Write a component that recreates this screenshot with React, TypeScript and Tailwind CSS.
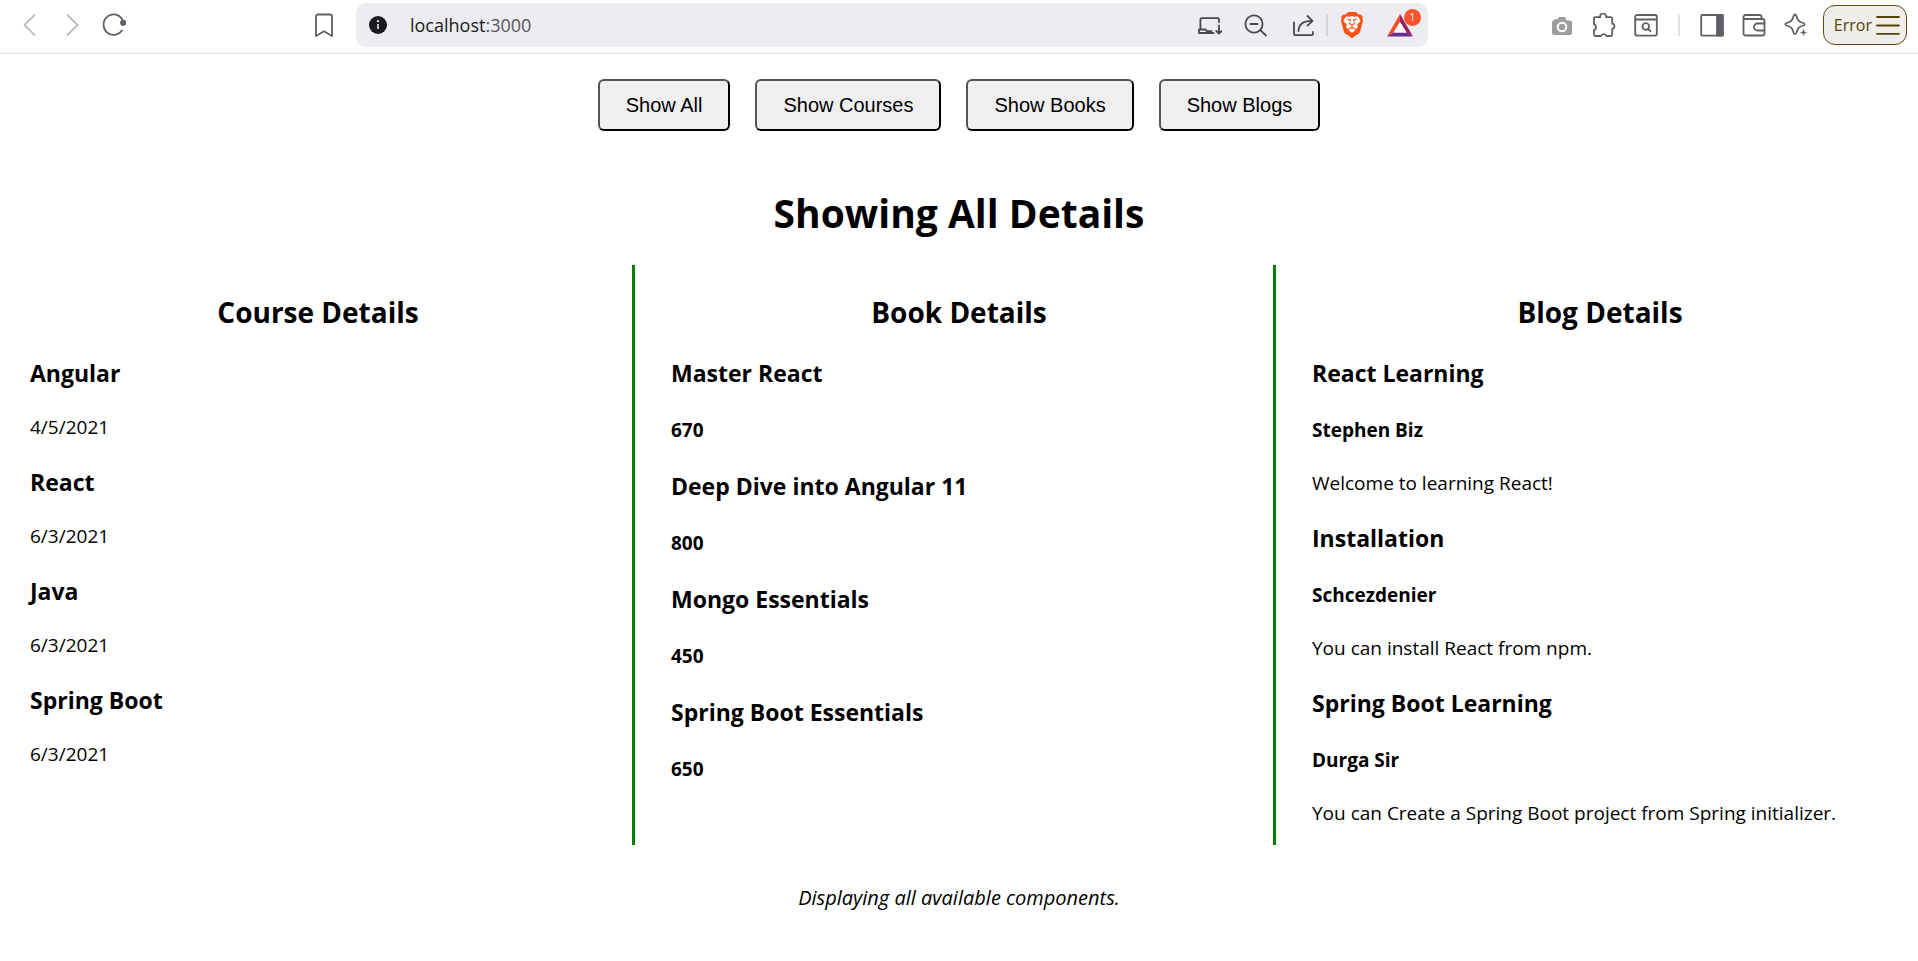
import { useState } from "react";
import type { ReactNode } from "react";
import { SiBrave } from "react-icons/si";

type View = "all" | "courses" | "books" | "blogs";

const courses = [
  { name: "Angular", date: "4/5/2021" },
  { name: "React", date: "6/3/2021" },
  { name: "Java", date: "6/3/2021" },
  { name: "Spring Boot", date: "6/3/2021" },
];

const books = [
  { name: "Master React", price: 670 },
  { name: "Deep Dive into Angular 11", price: 800 },
  { name: "Mongo Essentials", price: 450 },
  { name: "Spring Boot Essentials", price: 650 },
];

const blogs = [
  { title: "React Learning", author: "Stephen Biz", text: "Welcome to learning React!" },
  { title: "Installation", author: "Schcezdenier", text: "You can install React from npm." },
  {
    title: "Spring Boot Learning",
    author: "Durga Sir",
    text: "You can Create a Spring Boot project from Spring initializer.",
  },
];

const views: { id: View; label: string }[] = [
  { id: "all", label: "Show All" },
  { id: "courses", label: "Show Courses" },
  { id: "books", label: "Show Books" },
  { id: "blogs", label: "Show Blogs" },
];

function ToolButton({ label, children }: { label: string; children: ReactNode }) {
  return (
    <button type="button" aria-label={label} className="size-6 shrink-0">
      <svg
        viewBox="0 0 24 24"
        className="size-6"
        fill="none"
        stroke="currentColor"
        strokeWidth="1.8"
        strokeLinecap="round"
        strokeLinejoin="round"
      >
        {children}
      </svg>
    </button>
  );
}

function AddressBar() {
  return (
    <div className="ml-5 flex h-11 flex-1 items-center rounded-[10px] bg-[#edecf1] pr-[14px] pl-3 text-[#47474d]">
      <button type="button" aria-label="Site information" className="size-5 shrink-0">
        <svg viewBox="0 0 20 20" className="size-5">
          <circle cx="10" cy="10" r="9" fill="#1b1a20" />
          <circle cx="10" cy="6.2" r="1.1" fill="#edecf1" />
          <path d="M10 9v5" stroke="#edecf1" strokeWidth="1.6" />
        </svg>
      </button>
      <a href="#" className="ml-[22px] flex-1 text-[18px] leading-6 text-[#1b1a20]">
        localhost<span className="text-[#56555c]">:3000</span>
      </a>
      <ToolButton label="Install app">
        <path d="M21 9V6.600a1.400 1.400 0 0 0-1.400-1.400H3.800a1.400 1.400 0 0 0-1.400 1.400V16" />
        <path d="M1 16.500h6.200l1.600 1.600h4.700M1 16.500V20h14.500" />
        <path d="M21 12.500v8M18.300 18l2.700 2.700 2.700-2.700" />
      </ToolButton>
      <div className="ml-[22px] flex">
        <ToolButton label="Zoom out">
          <circle cx="10" cy="11" r="8.600" />
          <path d="M6.500 11h7M16.300 17.200L22 22.500" />
        </ToolButton>
      </div>
      <div className="ml-6 flex">
        <ToolButton label="Share">
          <path d="M2 9.500v11.300a1.400 1.400 0 0 0 1.400 1.400h16.200a1.400 1.400 0 0 0 1.400-1.400V19" />
          <path d="M6.500 18C6.700 11.500 10.500 7.800 20 7.800M15.500 3l5 4.800-5 4.800" />
        </ToolButton>
      </div>
      <span className="ml-[10px] h-[22px] w-[2px] bg-[#d2d2d8]" />
      <button type="button" aria-label="Brave Shields" className="ml-3 flex h-7 w-6 items-center justify-center">
        <svg viewBox="0 0 24 28" className="h-7 w-6">
          <path d="M6 6h12l2 4-2.500 10L12 25l-5.500-5L4 10z" fill="#fff" />
          <SiBrave x={-1} y={1} size={26} color="#fb5414" />
        </svg>
      </button>
      <button type="button" aria-label="Brave Rewards" className="relative ml-[22px] h-7 w-7">
        <svg viewBox="0 0 28 28" className="size-7">
          <path d="M14 3L1 25.500l6.500-4L14 11z" fill="#fa4a23" />
          <path d="M14 3l13 22.500-6.500-4L14 11z" fill="#9b1f63" />
          <path d="M1 25.500h26l-6.500-4h-13z" fill="#662d91" />
          <path d="M14 11l6.500 10.500h-13z" fill="#fff" />
        </svg>
        <span className="absolute -top-[2px] -right-[7px] size-[17px] rounded-full bg-[#fb542b] text-center text-[10px] leading-[17px] text-white">
          1
        </span>
      </button>
    </div>
  );
}

function BrowserBar() {
  return (
    <header className="flex h-[54px] items-center border-b border-[#dfdfe1] pr-[11px] pb-[3px] pl-[18px] text-[#5d6166]">
      <nav className="flex gap-[18px]">
        <span className="flex text-[#bcbdbf]">
          <ToolButton label="Back">
            <path d="M16.500 2L6.500 12l10 10" />
          </ToolButton>
        </span>
        <span className="flex text-[#bcbdbf]">
          <ToolButton label="Forward">
            <path d="M7.500 2l10 10-10 10" />
          </ToolButton>
        </span>
        <ToolButton label="Reload">
          <path d="M19.800 17.500A10 10.300 0 1 1 20.500 7" />
          <circle cx="21.200" cy="9.800" r="2.200" fill="currentColor" />
        </ToolButton>
      </nav>
      <div className="ml-[186px] flex">
        <ToolButton label="Bookmark">
          <path d="M4 3.500a2 2 0 0 1 2-2h12a2 2 0 0 1 2 2V23l-8-4.700L4 23z" />
        </ToolButton>
      </div>
      <AddressBar />
      <div className="ml-[122px] flex items-center gap-[18px]">
        <ToolButton label="Screenshot">
          <path
            d="M3.500 7.500h1V6h3v1.500L8.500 4.800A1 1 0 0 1 9.400 4h5.200a1 1 0 0 1 .9.800l1 2.700h3.700a1.800 1.800 0 0 1 1.800 1.800v10.900a1.800 1.800 0 0 1-1.800 1.800H3.800A1.800 1.800 0 0 1 2 20.200V9.300a1.800 1.800 0 0 1 1.500-1.800z"
            fill="#9d9d9d"
            stroke="none"
          />
          <circle cx="12" cy="14" r="4.300" stroke="#fff" strokeWidth="2" />
        </ToolButton>
        <ToolButton label="Extensions">
          <path d="M3 4.200h5.200a3 3 0 1 1 5.800 0h5a1.200 1.200 0 0 1 1.200 1.200v5a3 3 0 0 1 0 5.800v5.600a1.200 1.200 0 0 1-1.200 1.200h-4.500a3 3 0 0 0-5.600 0H3.200A1.200 1.200 0 0 1 2 21.800v-4.600a3.200 3.200 0 0 0 0-6V5.200a1 1 0 0 1 1-1z" />
        </ToolButton>
        <ToolButton label="Search tabs">
          <rect x="1.200" y="2" width="21.600" height="20.600" rx="1.800" />
          <path d="M1.500 6.500h21" />
          <circle cx="11.800" cy="13.500" r="3.300" />
          <path d="M14.300 16l2.200 2.200" />
        </ToolButton>
        <span className="mx-[2px] h-[22px] w-[2px] bg-[#e0e0e5]" />
        <ToolButton label="Sidebar">
          <rect x="1.200" y="2" width="21.600" height="20.600" rx="1" />
          <path d="M17 2h5.800v20.600H17z" fill="currentColor" />
        </ToolButton>
        <ToolButton label="Wallet">
          <path d="M1.500 6h19a2 2 0 0 1 2 2v12.500a2 2 0 0 1-2 2H3.500a2 2 0 0 1-2-2V4a2 2 0 0 1 2-2h14a2 2 0 0 1 2 2v2" />
          <path d="M22.500 10.500h-7a3.500 3.500 0 0 0 0 7h7" />
        </ToolButton>
        <ToolButton label="Assistant">
          <path d="M11 1.500c.8 0 1.100.4 1.300 1.200 1.300 4.600 2.300 6 7 7.300 1.800.5 1.800 2 0 2.500-4.700 1.300-5.700 2.700-7 7.500-.5 1.500-2.100 1.500-2.600 0C8.400 15.200 7.200 13.800 2.600 12.500c-1.700-.5-1.700-2 0-2.500 4.700-1.300 5.800-2.700 7.100-7.300.2-.8.500-1.200 1.300-1.200z" />
          <path
            d="M19.500 15.300l1.100 3.100 3.100 1.100-3.100 1.100-1.100 3.100-1.100-3.100-3.100-1.100 3.100-1.100z"
            fill="currentColor"
            stroke="#fff"
            strokeWidth=".4"
          />
        </ToolButton>
      </div>
      <button
        type="button"
        className="ml-[15px] flex h-10 items-center gap-1 rounded-xl border border-[#5c4b14] bg-[#efeeeb] pr-[6px] pl-[10px] text-[16px] leading-6 text-[#54430a]"
      >
        Error
        <svg viewBox="0 0 24 20" className="h-5 w-6" stroke="currentColor" strokeWidth="1.8" strokeLinecap="round">
          <path d="M1 2h22M1 10.500h22M1 18.800h22" />
        </svg>
      </button>
    </header>
  );
}

function Column({ heading, children }: { heading: string; children: ReactNode }) {
  return (
    <section className="min-w-0 flex-1 pt-7 pb-[19px]">
      <h2 className="mb-[26px] text-center text-[28px] leading-[38px] font-bold">{heading}</h2>
      <div className="flex flex-col gap-[26px]">{children}</div>
    </section>
  );
}

function Title({ children }: { children: ReactNode }) {
  return <h3 className="text-[23px] leading-8 font-bold">{children}</h3>;
}

function Subtitle({ children }: { children: ReactNode }) {
  return <h4 className="mt-7 mb-[27px] text-[19px] leading-[26px] font-bold last:mb-px">{children}</h4>;
}

function Text({ children }: { children: ReactNode }) {
  return <p className="mt-[25px] text-[19px] leading-[26px]">{children}</p>;
}

function Divider() {
  return <div className="mr-9 ml-[26px] w-[3px] bg-[#008000]" />;
}

export default function App() {
  const [view, setView] = useState<View>("all");
  const all = view === "all";

  return (
    <div className="min-h-screen bg-white font-['Open_Sans','Noto_Sans',sans-serif] text-black">
      <BrowserBar />
      <main>
        <div className="flex flex-wrap justify-center gap-[25px] pt-[25px]">
          {views.map((v) => (
            <button
              key={v.id}
              type="button"
              onClick={() => setView(v.id)}
              className="rounded-md border-2 border-t-[#555] border-r-black border-b-black border-l-[#555] bg-[#efefef] px-[26px] py-3 font-['Liberation_Sans',Arial,sans-serif] text-[20px] leading-6"
            >
              {v.label}
            </button>
          ))}
        </div>
        <h1 className="mt-14 text-center text-[39px] leading-[52px] font-bold">Showing All Details</h1>
        <div className="mt-[26px] flex px-[30px]">
          {(all || view === "courses") && (
            <Column heading="Course Details">
              {courses.map((c) => (
                <article key={c.name}>
                  <Title>{c.name}</Title>
                  <Text>{c.date}</Text>
                </article>
              ))}
            </Column>
          )}
          {all && <Divider />}
          {(all || view === "books") && (
            <Column heading="Book Details">
              {books.map((b) => (
                <article key={b.name}>
                  <Title>{b.name}</Title>
                  <Subtitle>{b.price}</Subtitle>
                </article>
              ))}
            </Column>
          )}
          {all && <Divider />}
          {(all || view === "blogs") && (
            <Column heading="Blog Details">
              {blogs.map((b) => (
                <article key={b.title}>
                  <Title>{b.title}</Title>
                  <Subtitle>{b.author}</Subtitle>
                  <Text>{b.text}</Text>
                </article>
              ))}
            </Column>
          )}
        </div>
        <p className="mt-10 text-center text-[20px] leading-[26px] italic">Displaying all available components.</p>
      </main>
    </div>
  );
}
